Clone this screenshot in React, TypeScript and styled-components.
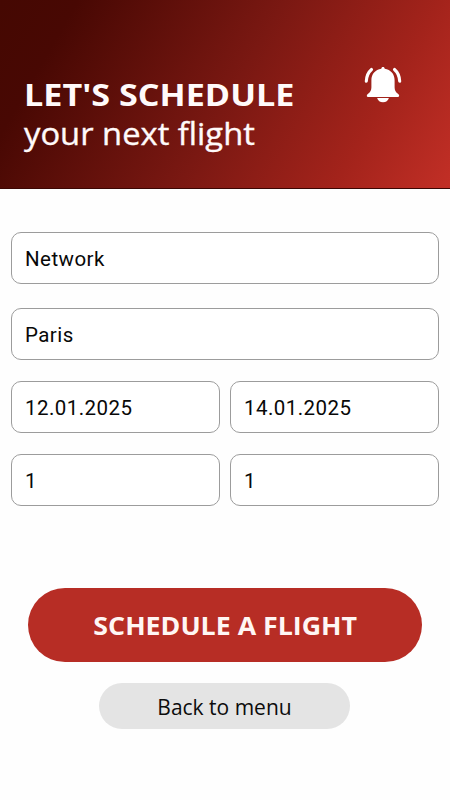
import React from "react";
import styled, { createGlobalStyle } from "styled-components";

const GlobalStyle = createGlobalStyle`
  * { box-sizing: border-box; }
  body { margin: 0; background: #fefefe; }
`;

const Screen = styled.main`
  width: 450px;
  height: 800px;
  overflow: hidden;
  background: #fefefe;
  font-family: "Open Sans", "Noto Sans", sans-serif;
`;

const Header = styled.header`
  display: flex;
  justify-content: space-between;
  height: 189px;
  padding: 65px 47px 0 24px;
  border-bottom: 1px solid #3c0704;
  background: linear-gradient(120deg, #450802 0%, #480803 14%, #7a1812 51%, #a3231b 79%, #c22f26 100%);
  color: #fffafa;
`;

const Heading = styled.div`
  padding-top: 10px;
`;

const Title = styled.h1`
  margin: 0;
  font-size: 31px;
  line-height: 39px;
  font-weight: 700;
  white-space: nowrap;
  transform-origin: left center;
  transform: scaleX(1.102);
`;

const Subtitle = styled.p`
  margin: 0;
  font-size: 31px;
  line-height: 39px;
  white-space: nowrap;
  -webkit-text-stroke: 0.35px currentColor;
  transform-origin: left center;
  transform: scaleX(1.056);
`;

const BellButton = styled.button`
  width: 40px;
  height: 40px;
  padding: 0;
  border: 0;
  background: none;
  color: #fff;
`;

const Form = styled.form`
  display: grid;
  grid-template-columns: 1fr 1fr;
  column-gap: 10px;
  padding: 43px 11px 0;
`;

const Field = styled.input<{ $wide?: boolean; $gap: number }>`
  grid-column: ${(p) => (p.$wide ? "1 / -1" : "auto")};
  width: 100%;
  height: 52px;
  margin: 0 0 ${(p) => p.$gap}px;
  padding: 2px 13px 0;
  border: 1px solid #9c9c9c;
  border-radius: 10px;
  outline: 0;
  background: #fff;
  color: #080808;
  font: 400 20.5px Roboto, sans-serif;
  letter-spacing: 0.45px;
`;

const Actions = styled.div`
  display: flex;
  flex-direction: column;
  align-items: center;
  gap: 21px;
  padding-top: 82px;
`;

const ActionButton = styled.button<{ $primary?: boolean }>`
  display: flex;
  align-items: center;
  justify-content: center;
  width: ${(p) => (p.$primary ? 394 : 251)}px;
  height: ${(p) => (p.$primary ? 74 : 46)}px;
  margin-right: ${(p) => (p.$primary ? 0 : 1)}px;
  padding: ${(p) => (p.$primary ? 0 : "2px 0 0")};
  border: 0;
  border-radius: 40px;
  background: ${(p) => (p.$primary ? "#b72d25" : "#e4e4e4")};
  color: ${(p) => (p.$primary ? "#fff6f4" : "#0c0c0c")};
  font-family: inherit;
  font-size: ${(p) => (p.$primary ? 25 : 21)}px;
  font-weight: ${(p) => (p.$primary ? 700 : 400)};
  white-space: nowrap;
`;

const ActionLabel = styled.span<{ $stretch: number }>`
  display: inline-block;
  transform: scaleX(${(p) => p.$stretch});
`;

const Bell = () => (
  <svg width="40" height="40" viewBox="0 0 40 40" fill="currentColor" aria-hidden="true">
    <path d="M20 1.900c1 0 1.600.6 1.700 1.900 6 .9 9.900 5.300 9.900 11.400v7c0 3.200 1 4.700 3.300 6.500 2 1.500 1.600 3.300-.6 3.300H5.700c-2.200 0-2.600-1.800-.6-3.300 2.300-1.800 3.300-3.300 3.300-6.500v-7c0-6.100 3.900-10.500 9.900-11.400.1-1.300.7-1.900 1.700-1.900z" />
    <path d="M14.100 33h11.800c-.8 2.700-3 4.300-5.900 4.300s-5.100-1.600-5.900-4.300z" />
    <path d="M8.500 4.500Q3.600 8.800 3.300 16.300M31.500 4.500q4.900 4.300 5.200 11.800" fill="none" stroke="currentColor" strokeWidth="3.100" strokeLinecap="round" />
  </svg>
);

export default function App() {
  return (
    <Screen>
      <GlobalStyle />
      <Header>
        <Heading>
          <Title>LET'S SCHEDULE</Title>
          <Subtitle>your next flight</Subtitle>
        </Heading>
        <BellButton aria-label="Notifications"><Bell /></BellButton>
      </Header>
      <Form>
        <Field $wide $gap={24} defaultValue="Network" />
        <Field $wide $gap={21} defaultValue="Paris" />
        <Field $gap={21} defaultValue="12.01.2025" />
        <Field $gap={21} defaultValue="14.01.2025" />
        <Field $gap={0} defaultValue="1" />
        <Field $gap={0} defaultValue="1" />
      </Form>
      <Actions>
        <ActionButton $primary><ActionLabel $stretch={1.07}>SCHEDULE A FLIGHT</ActionLabel></ActionButton>
        <ActionButton><ActionLabel $stretch={1}>Back to menu</ActionLabel></ActionButton>
      </Actions>
    </Screen>
  );
}
